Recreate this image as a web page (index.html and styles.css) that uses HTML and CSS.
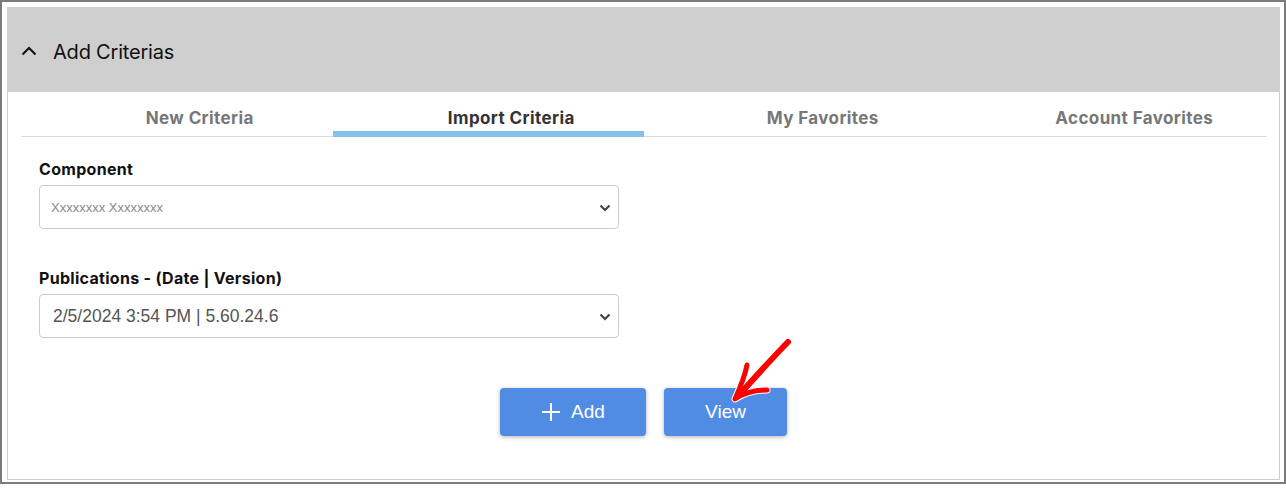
FILE: index.html
```html
<!DOCTYPE html>
<html>
<head>
<meta charset="utf-8">
<link rel="stylesheet" href="styles.css">
</head>
<body>
<div class="frame">
  <div class="panel">
    <div class="header">
      <svg class="chev-up" width="16" height="10" viewBox="0 0 16 10"><path d="M1.5 8.5 L8 2 L14.5 8.5" fill="none" stroke="#111" stroke-width="2"/></svg>
      <span class="title">Add Criterias</span>
    </div>
    <div class="tabs">
      <div class="tab">New Criteria</div>
      <div class="tab active">Import Criteria</div>
      <div class="tab">My Favorites</div>
      <div class="tab">Account Favorites</div>
    </div>
    <div class="form">
      <div class="field">
        <label class="label">Component</label>
        <div class="select">
          <span class="placeholder">Xxxxxxxx Xxxxxxxx</span>
          <svg class="chev-down" width="12" height="8" viewBox="0 0 12 8"><path d="M1.5 1.5 L6 6 L10.5 1.5" fill="none" stroke="#444" stroke-width="2.2"/></svg>
        </div>
      </div>
      <div class="field second">
        <label class="label">Publications - (Date | Version)</label>
        <div class="select">
          <span class="value">2/5/2024 3:54 PM | 5.60.24.6</span>
          <svg class="chev-down" width="12" height="8" viewBox="0 0 12 8"><path d="M1.5 1.5 L6 6 L10.5 1.5" fill="none" stroke="#444" stroke-width="2.2"/></svg>
        </div>
      </div>
      <div class="actions">
        <button class="btn add"><svg width="20" height="20" viewBox="0 0 20 20"><path d="M10 1 V19 M1 10 H19" stroke="#fff" stroke-width="2"/></svg><span>Add</span></button>
        <button class="btn view">View</button>
      </div>
    </div>
  </div>
  <svg class="arrow" width="70" height="72" viewBox="0 0 70 72">
    <g fill="none" stroke-linecap="round" stroke-linejoin="round">
      <path d="M60 6 C50 16 30 38 12 58" stroke="#fff" stroke-width="8"/>
      <path d="M19 29 C17 40 12 52 7 63 C16 57 28 54 39 54" stroke="#fff" stroke-width="7"/>
      <path d="M60 6 C50 16 30 38 12 58" stroke="#f00" stroke-width="6"/>
      <path d="M19 29 C17 40 12 52 7 63 C16 57 28 54 39 54" stroke="#f00" stroke-width="5"/>
    </g>
  </svg>
</div>
</body>
</html>
```

FILE: styles.css
```css
* { box-sizing: border-box; }
html, body { margin: 0; padding: 0; background: #fff; }
.frame {
  position: relative;
  width: 1286px;
  height: 484px;
  border: 2px solid #7b7b7b;
  padding: 5px 4px 2px 5px;
}
.panel {
  height: 100%;
  border: 1px solid #cccccc;
  border-top-color: #cfcfcf;
}
.header {
  height: 85px;
  background: #cfcfcf;
  display: flex;
  align-items: center;
  padding-left: 14px;
  margin: -1px -1px 0 -1px;
  padding-top: 4px;
}
.chev-up { margin-right: 16px; margin-top: -2px; }
.title {
  font-family: Inter, "Noto Sans", sans-serif;
  font-size: 20px;
  letter-spacing: -0.2px;
  color: #111;
}
.tabs {
  display: grid;
  grid-template-columns: repeat(4, 1fr);
  margin: 0 12px 0 13px;
  border-bottom: 1px solid #dcdcdc;
}
.tab {
  height: 45px;
  display: flex;
  align-items: center;
  justify-content: center;
  padding-left: 46px;
  padding-top: 13px;
  font-family: Inter, "Noto Sans", sans-serif;
  font-weight: 700;
  font-size: 17px;
  letter-spacing: 0.4px;
  color: #777;
  border-bottom: 6px solid transparent;
  margin-bottom: -1px;
}
.tab.active { color: #333; border-bottom-color: #85c1ec; }
.form { padding: 23px 0 0 31px; }
.field { width: 580px; }
.field.second { margin-top: 40px; }
.label {
  display: block;
  font-family: Inter, "Noto Sans", sans-serif;
  font-weight: 700;
  font-size: 16px;
  letter-spacing: 0.3px;
  color: #111;
  margin-bottom: 6px;
  line-height: 19px;
}
.select {
  height: 44px;
  border: 1px solid #cccccc;
  border-radius: 4px;
  display: flex;
  align-items: center;
  justify-content: space-between;
  padding: 0 7px 0 11px;
  font-family: "Liberation Sans", Arial, sans-serif;
}
.placeholder { font-size: 13px; color: #8a8a8a; }
.value { font-size: 17.5px; color: #555; padding-left: 2px; }
.chev-down { margin-top: 2px; }
.actions {
  display: flex;
  justify-content: center;
  gap: 18px;
  margin-top: 50px;
  margin-left: -31px;
}
.btn {
  height: 48px;
  border: none;
  border-radius: 4px;
  background: #508ce4;
  color: #fff;
  font-family: "Liberation Sans", Arial, sans-serif;
  font-size: 19px;
  box-shadow: 0 1px 4px rgba(0,0,0,0.3);
  display: flex;
  align-items: center;
  justify-content: center;
  gap: 10px;
  padding: 0;
}
.btn.add { width: 146px; }
.btn.view { width: 123px; }
.arrow { position: absolute; left: 726px; top: 334px; }
```
